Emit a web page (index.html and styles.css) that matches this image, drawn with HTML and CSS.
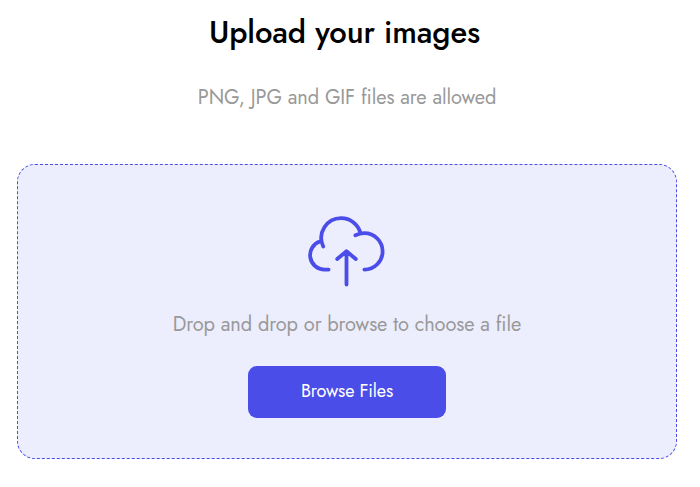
FILE: index.html
```
<!DOCTYPE html>
<html lang="en">
<head>
<meta charset="utf-8">
<title>Upload your images</title>
<link rel="stylesheet" href="styles.css">
</head>
<body>
<main class="uploader">
  <h1 class="title">Upload your images</h1>
  <p class="hint">PNG, JPG and GIF files are allowed</p>
  <section class="dropzone">
    <svg class="cloud" viewBox="306 214 80 74" aria-hidden="true">
      <path d="M328.6 269.6H325A14.5 14.5 0 0 1 320.5 241.2M323.2 246.5A19.8 19.8 0 0 1 341.3 218.2A19.8 19.8 0 0 1 360.3 232.5M355.4 235.2C358.2 234 361.4 233.2 364.4 233.2A18.2 18.2 0 0 1 364.4 269.6M346.5 284.5V251.5M337.2 259L346.5 251.3L355.8 259"/>
    </svg>
    <p class="prompt">Drop and drop or browse to choose a file</p>
    <button class="browse" type="button">Browse Files</button>
  </section>
</main>
</body>
</html>
```
FILE: styles.css
```
* { box-sizing: border-box; }
body { margin: 0; background: #fff; font-family: Jost, Lato, sans-serif; }
.uploader {
  width: 660px;
  margin-left: 17px;
  padding-top: 13px;
  display: flex;
  flex-direction: column;
  align-items: center;
}
.title {
  margin: 0 5px 0 0;
  font-size: 31px;
  letter-spacing: -0.1px;
  line-height: 40px;
  font-weight: 500;
  color: #000;
  white-space: nowrap;
}
.hint, .prompt {
  margin: 0;
  font-size: 20px;
  letter-spacing: -0.09px;
  line-height: 28px;
  color: #999;
  white-space: nowrap;
}
.hint { margin-top: 31px; }
.dropzone {
  width: 660px;
  height: 295px;
  margin-top: 52px;
  padding-top: 49px;
  display: flex;
  flex-direction: column;
  align-items: center;
  border: 1px dashed #4b4de8;
  border-radius: 18px;
  background: #ecedfd;
}
.cloud {
  width: 80px;
  height: 74px;
  flex: none;
  margin-right: 2px;
  fill: none;
  stroke: #4b4de8;
  stroke-width: 3.8;
  stroke-linecap: round;
  stroke-linejoin: round;
}
.prompt { margin-top: 23px; }
.browse {
  width: 198px;
  height: 52px;
  margin-top: 27px;
  padding: 0 0 2px;
  border: 0;
  border-radius: 9px;
  background: #4b4de8;
  color: #fff;
  font: 400 18px/50px Jost, Lato, sans-serif;
  letter-spacing: -0.17px;
}
```
